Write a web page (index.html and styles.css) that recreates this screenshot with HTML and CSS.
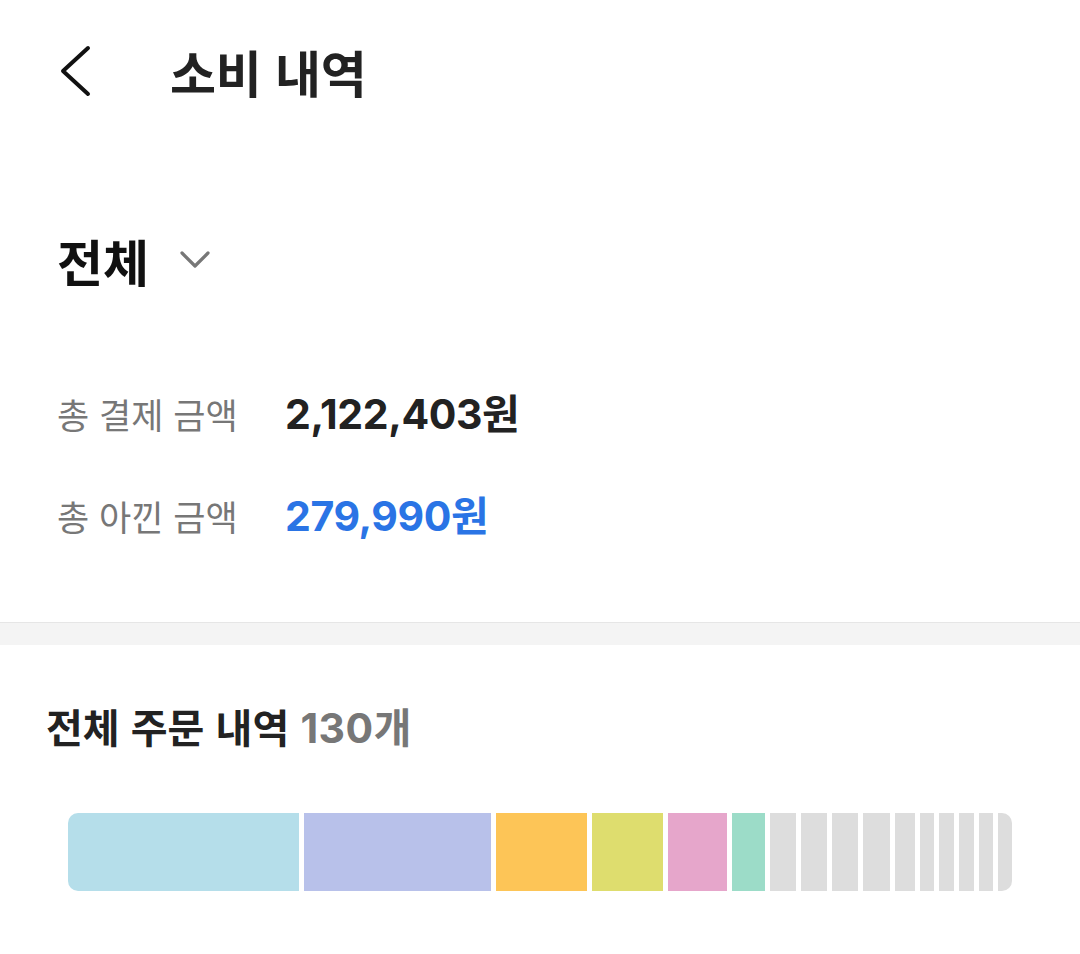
FILE: index.html
```html
<!DOCTYPE html>
<html lang="ko">
<head>
<meta charset="utf-8">
<link rel="stylesheet" href="styles.css">
</head>
<body>
<header class="topbar">
  <svg class="back" width="40" height="60" viewBox="0 0 40 60" aria-hidden="true">
    <polyline points="32,7 7,30 32,53" fill="none" stroke="#111" stroke-width="4" stroke-linecap="round" stroke-linejoin="round"/>
  </svg>
  <h1 class="title">소비 내역</h1>
</header>

<section class="summary">
  <div class="filter">
    <span class="filter-label">전체</span>
    <svg class="chev" width="32" height="20" viewBox="0 0 32 20" aria-hidden="true">
      <polyline points="3,4 16,17 29,4" fill="none" stroke="#777" stroke-width="3.2" stroke-linecap="round" stroke-linejoin="round"/>
    </svg>
  </div>
  <div class="rows">
    <div class="row">
      <span class="label">총 결제 금액</span>
      <span class="amount">2,122,403<span class="won">원</span></span>
    </div>
    <div class="row">
      <span class="label">총 아낀 금액</span>
      <span class="amount saved">279,990<span class="won">원</span></span>
    </div>
  </div>
</section>

<div class="divider"></div>

<section class="orders">
  <h2 class="orders-title">전체 주문 내역 <span class="count">130개</span></h2>
  <div class="bar">
    <div class="seg c1" style="width:231px"></div>
    <div class="seg c2" style="width:187px"></div>
    <div class="seg c3" style="width:91px"></div>
    <div class="seg c4" style="width:71px"></div>
    <div class="seg c5" style="width:59px"></div>
    <div class="seg c6" style="width:33px"></div>
    <div class="seg g" style="width:26px"></div>
    <div class="seg g" style="width:26px"></div>
    <div class="seg g" style="width:26px"></div>
    <div class="seg g" style="width:27px"></div>
    <div class="seg g" style="width:20px"></div>
    <div class="seg g" style="width:14px"></div>
    <div class="seg g" style="width:15px"></div>
    <div class="seg g" style="width:15px"></div>
    <div class="seg g" style="width:14px"></div>
    <div class="seg g" style="width:14px"></div>
  </div>
</section>
</body>
</html>
```

FILE: styles.css
```css
* { box-sizing: border-box; }
html, body { margin: 0; padding: 0; background: #fff; }
body {
  font-family: "Noto Sans CJK KR", "Noto Sans", sans-serif;
  color: #222;
  width: 1080px;
}
.topbar {
  display: flex;
  align-items: center;
  height: 142px;
  padding-left: 56px;
}
.back { display: block; flex: none; }
.title {
  margin: 0 0 0 74px;
  font-size: 50px;
  font-weight: 700;
  line-height: 1;
  color: #222;
  letter-spacing: -0.3px;
}
.summary {
  padding: 68px 0 0 57px;
  height: 480px;
}
.filter {
  display: flex;
  align-items: center;
  height: 100px;
}
.filter-label {
  font-size: 50px;
  font-weight: 700;
  color: #111;
  line-height: 1;
}
.chev { margin-left: 30px; margin-top: -2px; }
.rows { margin-top: 52px; }
.row {
  display: flex;
  align-items: center;
  height: 102px;
}
.label {
  width: 228px;
  font-size: 35px;
  color: #777;
  line-height: 1;
}
.amount {
  font-family: Inter, "Noto Sans CJK KR", sans-serif;
  font-size: 41px;
  font-weight: 700;
  color: #222;
  line-height: 1;
  letter-spacing: -0.4px;
}
.amount .won { font-family: "Noto Sans CJK KR", sans-serif; }
.amount.saved { color: #2a74e5; }
.divider {
  height: 23px;
  background: #f4f4f4;
  border-top: 1px solid #e6e6e6;
}
.orders { padding: 0 0 0 46px; }
.orders-title {
  margin: 0;
  padding-top: 61px;
  font-size: 40px;
  font-weight: 700;
  line-height: 1;
  color: #222;
}
.count {
  font-family: Inter, "Noto Sans CJK KR", sans-serif;
  font-size: 41px;
  color: #777;
  letter-spacing: 0.5px;
}
.bar {
  display: flex;
  gap: 5px;
  margin: 64px 0 0 22px;
  height: 78px;
  border-radius: 10px;
  overflow: hidden;
  width: 944px;
}
.seg { flex: none; height: 100%; }
.c1 { background: #b5deea; }
.c2 { background: #b8c1ea; }
.c3 { background: #fdc557; }
.c4 { background: #dedd6e; }
.c5 { background: #e6a6cb; }
.c6 { background: #9cdcc8; }
.g { background: #dddddd; }
```
